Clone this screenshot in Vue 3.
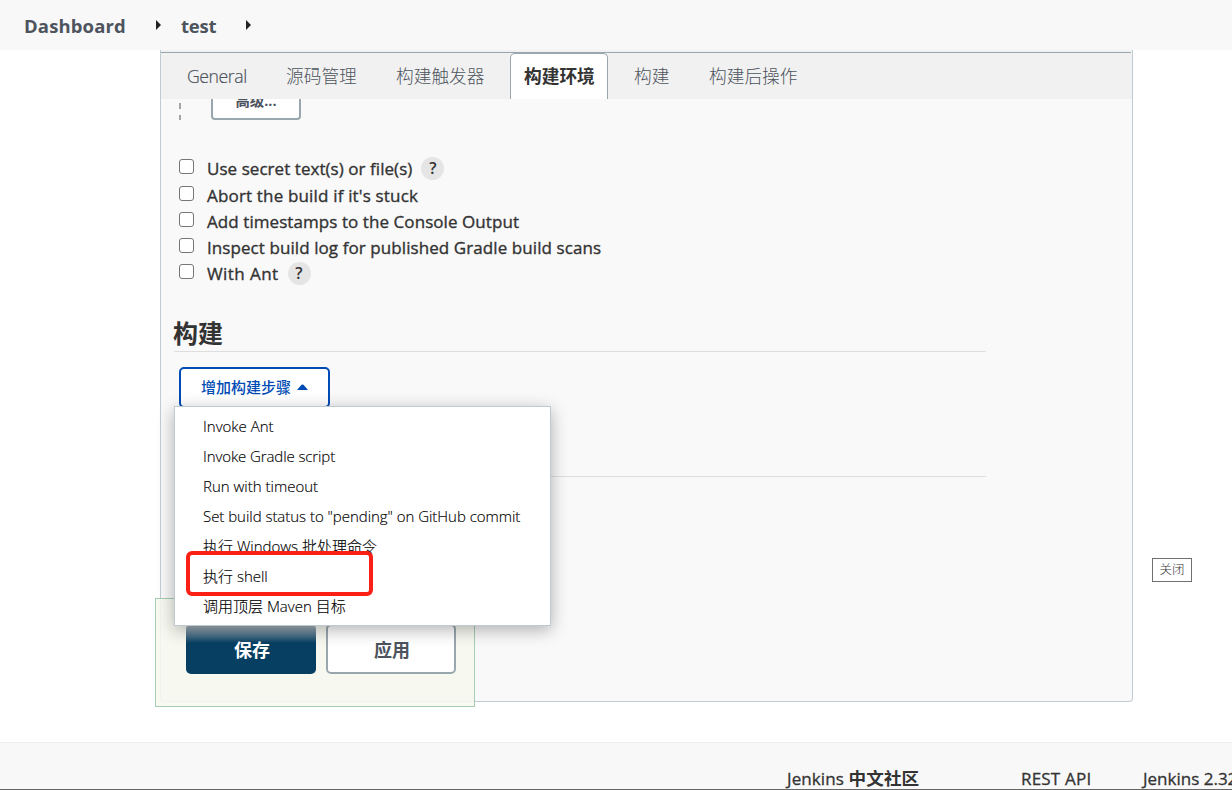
<script setup>
const tabs = [
  { label: 'General', cls: 'general' },
  { label: '源码管理', cls: 'scm' },
  { label: '构建触发器', cls: 'triggers' },
  { label: '构建环境', cls: 'active' },
  { label: '构建', cls: 'build' },
  { label: '构建后操作', cls: 'post' },
]
const options = [
  { label: 'Use secret text(s) or file(s)', help: true, cls: 'o1' },
  { label: "Abort the build if it's stuck", cls: 'o2' },
  { label: 'Add timestamps to the Console Output', cls: 'o3' },
  { label: 'Inspect build log for published Gradle build scans', cls: 'o4' },
  { label: 'With Ant', help: true, cls: 'o5' },
]
const steps = [
  { label: 'Invoke Ant', cls: 's1' },
  { label: 'Invoke Gradle script', cls: 's2' },
  { label: 'Run with timeout', cls: 's3' },
  { label: 'Set build status to "pending" on GitHub commit', cls: 's4' },
  { label: '执行 Windows 批处理命令', cls: 's5' },
  { label: '执行 shell', cls: 's6' },
  { label: '调用顶层 Maven 目标', cls: 's7' },
]
</script>

<template>
  <div class="page">
    <header class="crumbs">
      <span class="crumb c1">Dashboard</span>
      <svg class="arrow a1" width="5" height="10" viewBox="0 0 5 10"><path d="M0 0L5 5L0 10Z" fill="#222" /></svg>
      <span class="crumb c2">test</span>
      <svg class="arrow a2" width="5" height="10" viewBox="0 0 5 10"><path d="M0 0L5 5L0 10Z" fill="#222" /></svg>
    </header>

    <main class="panel">
      <nav class="tabs">
        <div v-for="t in tabs" :key="t.label" class="tab" :class="t.cls"><span>{{ t.label }}</span></div>
      </nav>
      <div class="advanced">
        <span class="dash"></span>
        <div class="adv-btn"><span>高级...</span></div>
      </div>
      <div class="options">
        <label v-for="o in options" :key="o.label" class="option" :class="o.cls">
          <i class="box"></i>
          <span class="txt">{{ o.label }}</span>
          <b v-if="o.help" class="help">?</b>
        </label>
      </div>
      <h2 class="title">构建</h2>
      <div class="section">
        <button class="add">
          <span>增加构建步骤</span>
          <svg width="11" height="6" viewBox="0 0 11 6"><path d="M0 6L4.5 .8Q5.5 0 6.5 .8L11 6Z" fill="#004bb5" /></svg>
        </button>
        <div class="menu">
          <div v-for="s in steps" :key="s.label" class="step" :class="s.cls"><span>{{ s.label }}</span></div>
          <div class="mark"></div>
        </div>
      </div>
    </main>

    <div class="save-bar">
      <button class="save">保存</button>
      <button class="apply">应用</button>
    </div>
    <div class="close">关闭</div>

    <footer class="footer">
      <span class="f1">Jenkins <b>中文社区</b></span>
      <span class="f2">REST API</span>
      <span class="f3">Jenkins 2.32</span>
    </footer>
  </div>
</template>

<style>
body { overflow: hidden; background: #fff; }
</style>

<style scoped>
.page, .page * { box-sizing: border-box; }
.page {
  position: relative;
  width: 1232px;
  height: 790px;
  overflow: hidden;
  display: flex;
  flex-direction: column;
  font-family: "Open Sans", "Noto Sans CJK SC", sans-serif;
  color: #333;
  white-space: nowrap;
}
button { font-family: inherit; margin: 0; padding: 0; }
.crumbs {
  height: 50px;
  flex: none;
  background: #f8f8f8;
  display: flex;
  align-items: center;
  padding: 2px 0 0 24px;
  font-size: 18.5px;
  font-weight: 700;
  color: #4d545d;
}
.crumb { line-height: 24px; margin-top: -1px; }
.c1 { width: 132px; letter-spacing: .13px; }
.c2 { width: 60px; margin-left: 20px; letter-spacing: -.2px; }
.arrow { flex: none; margin-top: -2px; }
.a2 { margin-left: 5px; }
.panel {
  width: 973px;
  height: 652px;
  flex: none;
  margin-left: 160px;
  border: 1px solid #c0ccd3;
  border-top: 0;
  border-radius: 0 0 4px 4px;
  background: #f9f9f9;
}
.tabs {
  height: 49px;
  background: #f1f1f1;
  display: flex;
  position: relative;
  padding-top: 3px;
  font-size: 17.7px;
  font-weight: 300;
  color: #4d545d;
  line-height: 46px;
}
.tabs::before {
  content: "";
  position: absolute;
  left: 0;
  top: 2px;
  width: 970px;
  height: 1px;
  background: #98a6ae;
}
.tab { flex: none; }
.general { width: 125px; padding-left: 26px; letter-spacing: -.45px; -webkit-text-stroke: .2px #4d545d; }
.scm { width: 110px; }
.triggers { width: 114px; }
.active {
  width: 98px;
  height: 46px;
  padding-left: 13px;
  border: 1px solid #98a6ae;
  border-bottom: 0;
  border-radius: 5px 5px 0 0;
  background: #fff;
  color: #333;
  font-weight: 700;
}
.active span { position: relative; top: -1px; }
.build { margin-left: 26px; width: 75px; }
.advanced { height: 21px; overflow: hidden; display: flex; padding-left: 18px; }
.dash {
  width: 2px;
  height: 21px;
  background: repeating-linear-gradient(to bottom, transparent 0 4px, #a5a5a5 4px 10px, transparent 10px 11.5px);
}
.adv-btn {
  margin: -18px 0 0 30px;
  width: 90px;
  height: 39px;
  border: 2px solid #98a6ae;
  border-radius: 4px;
  background: #fff;
  color: #4d545d;
  font-weight: 700;
  font-size: 14.4px;
  line-height: 35px;
  text-align: center;
}
.options { padding: 35px 0 0 18px; height: 172px; }
.option { display: flex; align-items: center; height: 26px; font-size: 17px; }
.txt { -webkit-text-stroke: .35px #333; }
.o1 .txt { letter-spacing: .05px; }
.o2 .txt { letter-spacing: .17px; }
.o3 .txt { letter-spacing: .07px; }
.o4 .txt { letter-spacing: .08px; }
.o5 .txt { letter-spacing: .42px; }
.o1 { height: 27px; }
.box { width: 15px; height: 15px; border: 1px solid #767676; border-radius: 3px; background: #fff; margin: -4px 13px 0 0; }
.o1 .box { margin-top: -5px; }
.help {
  width: 23px;
  height: 23px;
  border-radius: 50%;
  background: #e5e5e5;
  text-align: center;
  font-size: 16px;
  line-height: 23px;
  margin-left: 9px;
  font-weight: 600;
}
.title { margin: 24px 0 0 13px; width: 812px; height: 36px; border-bottom: 1px solid #dedede; font-size: 25px; line-height: 34px; font-weight: 700; text-indent: -1px; }
.section { position: relative; margin-left: 13px; width: 812px; height: 125px; border-bottom: 1px solid #dedede; padding: 15px 0 0 5px; }
.add {
  width: 151px;
  height: 41px;
  border: 2px solid #004bb5;
  border-radius: 5px;
  background: #fff;
  color: #004bb5;
  font-size: 15px;
  font-weight: 500;
  display: flex;
  align-items: center;
  padding-left: 20px;
}
.add span { margin-top: -2px; }
.add svg { margin: -2px 0 0 6px; }
.menu {
  position: absolute;
  z-index: 5;
  left: 0;
  top: 54px;
  width: 377px;
  height: 220px;
  border: 1px solid #bfcad0;
  background: #fff;
  box-shadow: 0 4px 16px rgba(0, 0, 0, .3);
  padding: 4px 0 0 28px;
  font-size: 15px;
  font-weight: 300;
  color: #000;
}
.step { height: 30px; line-height: 30px; -webkit-text-stroke: .15px #000; }
.s2 { letter-spacing: -.1px; }
.s4 { letter-spacing: -.03px; }
.mark { position: absolute; left: 11px; top: 144px; width: 187px; height: 45px; border: 4px solid #fb2015; border-radius: 6px; }
.save-bar {
  position: absolute;
  left: 155px;
  top: 598px;
  width: 320px;
  height: 109px;
  border: 1px solid #a5cdb5;
  background: rgba(247, 249, 240, .85);
  display: flex;
  gap: 10px;
  padding: 25px 0 0 30px;
}
.save, .apply { width: 130px; height: 50px; border-radius: 5px; font-size: 18px; font-weight: 700; line-height: 46px; padding: 2px 0 0 2px; }
.save { border: 0; background: linear-gradient(to bottom, #a3b1ba 2px, #073f62 19px); color: #fff; }
.apply { border: 2px solid #98a6ae; background: #fff; color: #4d545d; line-height: 43px; }
.close { position: absolute; left: 1152px; top: 558px; width: 40px; height: 24px; border: 1px solid #707070; font-size: 12.5px; line-height: 21px; text-align: center; background: #fff; font-weight: 300; }
.footer {
  margin-top: 40px;
  height: 48px;
  flex: none;
  border-top: 1px solid #efefef;
  border-bottom: 1px solid #666;
  background: #f8f8f8;
  display: flex;
  padding: 22px 0 0 787px;
  font-size: 17px;
  line-height: 27px;
  overflow: hidden;
  -webkit-text-stroke: .3px #333;
}
.f1, .f2, .f3 { flex: none; }
.f1 { width: 234px; letter-spacing: .1px; }
.f1 b { font-size: 17.6px; -webkit-text-stroke: 0; }
.f2 { width: 122px; letter-spacing: .2px; }
</style>
